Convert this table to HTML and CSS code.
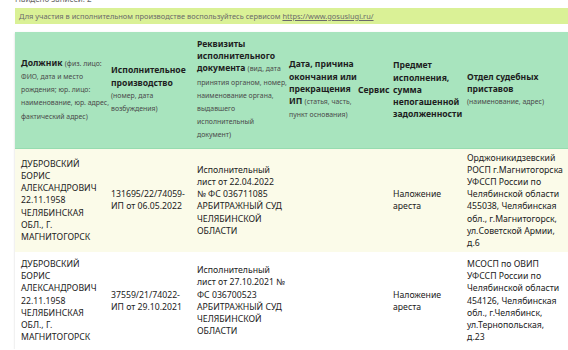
FILE: index.html
```
<!DOCTYPE html>
<html lang="ru">
<head>
<meta charset="utf-8">
<link rel="stylesheet" href="styles.css">
</head>
<body>
<div class="page">
  <div class="found">Найдено записей: 2</div>
  <div class="notice">Для участия в исполнительном производстве воспользуйтесь сервисом <a class="link" href="#">https://www.gosuslugi.ru/</a></div>
  <table class="results">
    <colgroup>
      <col class="c1"><col class="c2"><col class="c3"><col class="c4"><col class="c5"><col class="c6"><col class="c7">
    </colgroup>
    <thead>
      <tr>
        <th><b>Должник</b> <span class="hint">(физ. лицо:<br>ФИО, дата и место<br>рождения; юр. лицо:<br>наименование, юр. адрес,<br>фактический адрес)</span></th>
        <th><b>Исполнительное<br>производство</b><br><span class="hint">(номер, дата<br>возбуждения)</span></th>
        <th><b>Реквизиты<br>исполнительного<br>документа</b> <span class="hint">(вид, дата<br>принятия органом, номер,<br>наименование органа,<br>выдавшего<br>исполнительный<br>документ)</span></th>
        <th><b>Дата, причина<br>окончания или<br>прекращения<br>ИП</b> <span class="hint">(статья, часть,<br>пункт основания)</span></th>
        <th><b>Сервис</b></th>
        <th><b>Предмет<br>исполнения,<br>сумма<br>непогашенной<br>задолженности</b></th>
        <th><b>Отдел судебных<br>приставов</b><br><span class="hint">(наименование, адрес)</span></th>
      </tr>
    </thead>
    <tbody>
      <tr class="odd">
        <td>ДУБРОВСКИЙ<br>БОРИС<br>АЛЕКСАНДРОВИЧ<br>22.11.1958<br>ЧЕЛЯБИНСКАЯ<br>ОБЛ., Г.<br>МАГНИТОГОРСК</td>
        <td>131695/22/74059-<br>ИП от 06.05.2022</td>
        <td>Исполнительный<br>лист от 22.04.2022<br>№ ФС 036711085<br>АРБИТРАЖНЫЙ СУД<br>ЧЕЛЯБИНСКОЙ<br>ОБЛАСТИ</td>
        <td></td>
        <td></td>
        <td>Наложение<br>ареста</td>
        <td>Орджоникидзевский<br>РОСП г.Магнитогорска<br>УФССП России по<br>Челябинской области<br>455038, Челябинская<br>обл., г.Магнитогорск,<br>ул.Советской Армии,<br>д.6</td>
      </tr>
      <tr class="even">
        <td>ДУБРОВСКИЙ<br>БОРИС<br>АЛЕКСАНДРОВИЧ<br>22.11.1958<br>ЧЕЛЯБИНСКАЯ<br>ОБЛ., Г.<br>МАГНИТОГОРСК</td>
        <td>37559/21/74022-<br>ИП от 29.10.2021</td>
        <td>Исполнительный<br>лист от 27.10.2021 №<br>ФС 036700523<br>АРБИТРАЖНЫЙ СУД<br>ЧЕЛЯБИНСКОЙ<br>ОБЛАСТИ</td>
        <td></td>
        <td></td>
        <td>Наложение<br>ареста</td>
        <td>МСОСП по ОВИП<br>УФССП России по<br>Челябинской области<br>454126, Челябинская<br>обл., г.Челябинск,<br>ул.Тернопольская,<br>д.23</td>
      </tr>
    </tbody>
  </table>
</div>
</body>
</html>
```
FILE: styles.css
```
html, body {
  margin: 0;
  padding: 0;
  background: #ffffff;
  overflow: hidden;
}
body {
  font-family: "Noto Sans", "Open Sans", sans-serif;
  color: #222222;
}
.page {
  padding-left: 15px;
}
.found {
  margin-top: -6px;
  font-size: 8px;
  line-height: 10px;
  color: #666666;
}
.notice {
  margin-top: 4px;
  background: #daf196;
  padding: 3px 4px;
  font-size: 7.45px;
  line-height: 10px;
  color: #6a6a6a;
}
.link {
  color: #6a6a6a;
}
.results {
  margin-top: 8px;
  width: 553px;
  border-collapse: collapse;
  table-layout: fixed;
  box-shadow: 0 1px 2px rgba(0, 0, 0, 0.18);
}
.c1 { width: 90px; }
.c2 { width: 86px; }
.c3 { width: 92px; }
.c4 { width: 69px; }
.c5 { width: 35px; }
.c6 { width: 74px; }
.c7 { width: auto; }
.results th {
  background: #a8e4be;
  text-align: left;
  vertical-align: middle;
  font-weight: normal;
  font-size: 8.6px;
  line-height: 12.2px;
  padding: 6px 0 6px 6px;
  white-space: nowrap;
  border-bottom: 1px solid #96dcb0;
}
.results th b {
  font-weight: 700;
  color: #1e1e1e;
}
.hint {
  font-size: 6.9px;
  color: #4a4a4a;
}
.results td {
  vertical-align: middle;
  font-size: 8.7px;
  line-height: 12.2px;
  padding: 3px 0 3px 6px;
  white-space: nowrap;
}
.results tr.even {
  height: 97px;
}
.odd td {
  background: #fbfbe9;
}
.even td {
  background: #ffffff;
}
```
